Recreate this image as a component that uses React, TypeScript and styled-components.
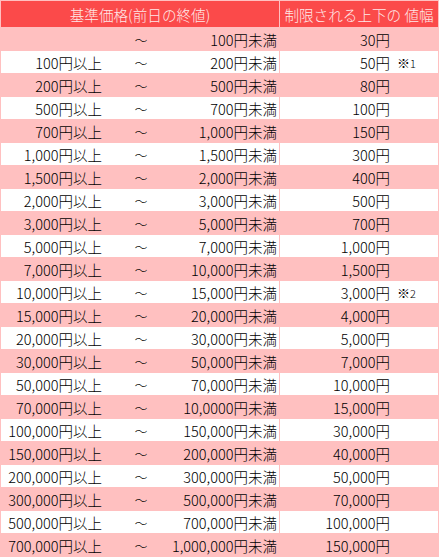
import React from "react";
import styled, { createGlobalStyle } from "styled-components";

const Global = createGlobalStyle`
  html, body { margin: 0; padding: 0; background: #ffffff; }
  body { font-family: "Noto Sans CJK JP", "Noto Sans", sans-serif; }
`;

const Table = styled.div`
  display: grid;
  grid-template-columns: 278px 158px;
  gap: 1px;
  padding: 1px;
  width: 437px;
  background: #ffc0c0;
`;

const HeadCell = styled.div`
  height: 26px;
  background: #fb4a4a;
  color: #ffe8e8;
  font-size: 14.6px;
  font-weight: 300;
  display: flex;
  align-items: center;
  justify-content: center;
  white-space: nowrap;
`;

const RangeCell = styled.div<{ $alt: boolean }>`
  height: 22px;
  background: ${(p) => (p.$alt ? "#ffffff" : "#ffc0c0")};
  display: grid;
  grid-template-columns: 102px 76px minmax(0, 1fr);
  align-items: center;
  font-size: 14.5px;
  font-weight: 300;
  color: #000;
  white-space: nowrap;
`;

const From = styled.span`
  display: flex;
  justify-content: flex-end;
  padding-right: 1px;
`;

const Wave = styled.span`
  display: flex;
  justify-content: center;
  font-size: 13px;
`;

const To = styled.span`
  display: flex;
  justify-content: flex-end;
  padding-right: 2px;
  min-width: 0;
`;

const WidthCell = styled.div<{ $alt: boolean }>`
  height: 22px;
  background: ${(p) => (p.$alt ? "#ffffff" : "#ffc0c0")};
  display: grid;
  grid-template-columns: 110px minmax(0, 1fr);
  align-items: center;
  font-size: 14.5px;
  font-weight: 300;
  color: #000;
  white-space: nowrap;
`;

const Amount = styled.span`
  display: flex;
  justify-content: flex-end;
`;

const Note = styled.span`
  padding-left: 7px;
  font-size: 13px;
  small {
    font-size: 11px;
  }
`;

type Row = { from: string; to: string; width: string; note?: string };

const rows: Row[] = [
  { from: "", to: "100円未満", width: "30円" },
  { from: "100円以上", to: "200円未満", width: "50円", note: "1" },
  { from: "200円以上", to: "500円未満", width: "80円" },
  { from: "500円以上", to: "700円未満", width: "100円" },
  { from: "700円以上", to: "1,000円未満", width: "150円" },
  { from: "1,000円以上", to: "1,500円未満", width: "300円" },
  { from: "1,500円以上", to: "2,000円未満", width: "400円" },
  { from: "2,000円以上", to: "3,000円未満", width: "500円" },
  { from: "3,000円以上", to: "5,000円未満", width: "700円" },
  { from: "5,000円以上", to: "7,000円未満", width: "1,000円" },
  { from: "7,000円以上", to: "10,000円未満", width: "1,500円" },
  { from: "10,000円以上", to: "15,000円未満", width: "3,000円", note: "2" },
  { from: "15,000円以上", to: "20,000円未満", width: "4,000円" },
  { from: "20,000円以上", to: "30,000円未満", width: "5,000円" },
  { from: "30,000円以上", to: "50,000円未満", width: "7,000円" },
  { from: "50,000円以上", to: "70,000円未満", width: "10,000円" },
  { from: "70,000円以上", to: "10,0000円未満", width: "15,000円" },
  { from: "100,000円以上", to: "150,000円未満", width: "30,000円" },
  { from: "150,000円以上", to: "200,000円未満", width: "40,000円" },
  { from: "200,000円以上", to: "300,000円未満", width: "50,000円" },
  { from: "300,000円以上", to: "500,000円未満", width: "70,000円" },
  { from: "500,000円以上", to: "700,000円未満", width: "100,000円" },
  { from: "700,000円以上", to: "1,000,000円未満", width: "150,000円" },
];

export default function App() {
  return (
    <>
      <Global />
      <Table>
        <HeadCell>基準価格(前日の終値)</HeadCell>
        <HeadCell>制限される上下の 値幅</HeadCell>
        {rows.map((r, i) => (
          <React.Fragment key={i}>
            <RangeCell $alt={i % 2 === 1}>
              <From>{r.from}</From>
              <Wave>～</Wave>
              <To>{r.to}</To>
            </RangeCell>
            <WidthCell $alt={i % 2 === 1}>
              <Amount>{r.width}</Amount>
              <Note>
                {r.note ? (
                  <>
                    ※<small>{r.note}</small>
                  </>
                ) : null}
              </Note>
            </WidthCell>
          </React.Fragment>
        ))}
      </Table>
    </>
  );
}
